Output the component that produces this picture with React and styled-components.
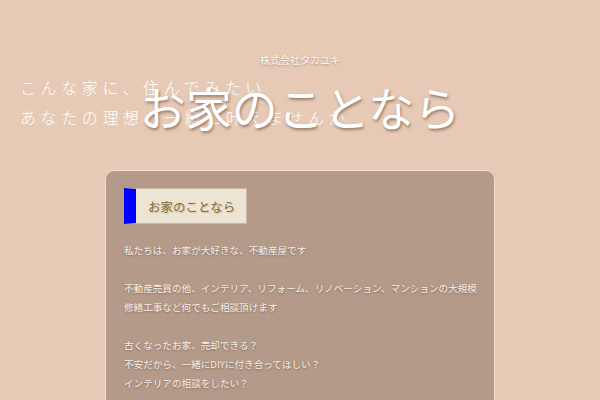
import styled, { createGlobalStyle } from "styled-components";

const GlobalStyle = createGlobalStyle`
  html, body {
    margin: 0;
    padding: 0;
    background: #e6cab6;
    font-family: "Noto Sans CJK JP", "Noto Sans", sans-serif;
  }
`;

const Page = styled.div`
  width: 600px;
  height: 400px;
  overflow: hidden;
`;

const Hero = styled.header`
  position: relative;
  padding-top: 52px;
  height: 118px;
`;

const Company = styled.div`
  text-align: center;
  font-size: 10px;
  line-height: 16px;
  color: #fdf7f2;
  text-shadow: 0 1px 2px rgba(120, 90, 70, 0.5);
`;

const Tagline = styled.p`
  margin: 4px 0 0 20px;
  font-size: 16px;
  line-height: 30px;
  letter-spacing: 4.6px;
  color: #ffffff;
  font-weight: 300;
`;

const Title = styled.h1`
  position: absolute;
  left: 0;
  right: 0;
  top: 76px;
  margin: 0;
  text-align: center;
  font-size: 46px;
  line-height: 60px;
  font-weight: 400;
  color: #ffffff;
  text-shadow: 1px 2px 3px rgba(90, 60, 40, 0.55);
`;

const Card = styled.section`
  margin: 0 auto;
  width: 390px;
  box-sizing: border-box;
  padding: 17px 16px 20px 18px;
  background: #b39a89;
  border: 1px solid #f3dfd0;
  border-radius: 9px;
  height: 300px;
`;

const Heading = styled.h2`
  display: inline-flex;
  align-items: center;
  box-sizing: border-box;
  height: 36px;
  margin: 0 0 17px;
  padding: 0 11px 0 12px;
  background: #ede5d3;
  border: 1px solid #cbb9a5;
  border-left: 12px solid #0000ff;
  font-size: 12.5px;
  font-weight: 400;
  color: #8a6c36;
  text-shadow: 1px 1px 1.5px rgba(120, 90, 40, 0.3);
`;

const Body = styled.div`
  font-size: 9.6px;
  line-height: 19px;
  color: #f6eee8;
  white-space: nowrap;
  text-shadow: 0 1px 2px rgba(80, 55, 40, 0.45);
`;

const Para = styled.p`
  margin: 0 0 19px;
`;

export default function App() {
  return (
    <Page>
      <GlobalStyle />
      <Hero>
        <Company>株式会社タカユキ</Company>
        <Tagline>
          こんな家に、住んでみたい
          <br />
          あなたの理想、一緒に叶えませんか
        </Tagline>
        <Title>お家のことなら</Title>
      </Hero>
      <Card>
        <Heading>お家のことなら</Heading>
        <Body>
          <Para>私たちは、お家が大好きな、不動産屋です</Para>
          <Para>
            不動産売買の他、インテリア、リフォーム、リノベーション、マンションの大規模
            <br />
            修繕工事など何でもご相談頂けます
          </Para>
          <Para>
            古くなったお家、売却できる？
            <br />
            不安だから、一緒にDIYに付き合ってほしい？
            <br />
            インテリアの相談をしたい？
          </Para>
        </Body>
      </Card>
    </Page>
  );
}
